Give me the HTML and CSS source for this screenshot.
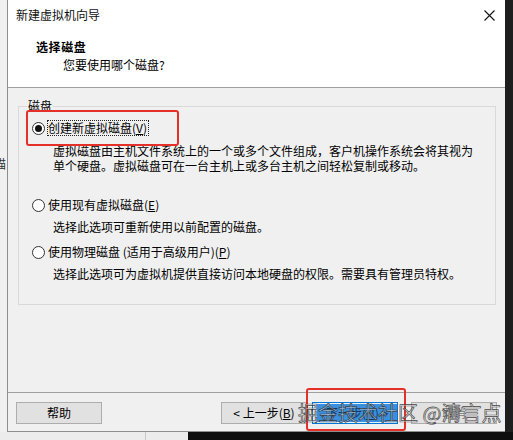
FILE: index.html
```html
<!DOCTYPE html>
<html lang="zh-CN">
<head>
<meta charset="utf-8">
<title>新建虚拟机向导</title>
<link rel="stylesheet" href="styles.css">
</head>
<body>
<div class="screen">
  <div class="left-strip"><span class="peek">描</span></div>
  <div class="dialog">
    <div class="header">
      <div class="titlebar">
        <span class="title">新建虚拟机向导</span>
        <svg class="close" width="11" height="11" viewBox="0 0 11 11"><path d="M0.5 0.5 L10.5 10.5 M10.5 0.5 L0.5 10.5" stroke="#111" stroke-width="1.1" fill="none"/></svg>
      </div>
      <div class="heading">
        <div class="h-title">选择磁盘</div>
        <div class="h-sub">您要使用哪个磁盘?</div>
      </div>
    </div>
    <div class="body">
      <div class="group">
        <div class="legend">磁盘</div>
        <div class="opt opt1">
          <span class="radio checked"><span class="dot"></span></span>
          <span class="label focus">创建新虚拟磁盘(<u>V</u>)</span>
        </div>
        <div class="desc desc1">虚拟磁盘由主机文件系统上的一个或多个文件组成，客户机操作系统会将其视为<br>单个硬盘。虚拟磁盘可在一台主机上或多台主机之间轻松复制或移动。</div>
        <div class="opt opt2">
          <span class="radio"></span>
          <span class="label">使用现有虚拟磁盘(<u>E</u>)</span>
        </div>
        <div class="desc desc2">选择此选项可重新使用以前配置的磁盘。</div>
        <div class="opt opt3">
          <span class="radio"></span>
          <span class="label">使用物理磁盘 (适用于高级用户)(<u>P</u>)</span>
        </div>
        <div class="desc desc3">选择此选项可为虚拟机提供直接访问本地硬盘的权限。需要具有管理员特权。</div>
      </div>
    </div>
    <div class="footer">
      <div class="btn help">帮助</div>
      <div class="btn back">&lt; 上一步(<u>B</u>)</div>
      <div class="btn next"><span class="next-hl">下一步(<u>N</u>) &gt;</span></div>
      <div class="btn cancel">取消</div>
    </div>
  </div>
  <div class="right-strip"></div>
  <div class="bottom-strip"><div class="bs-grey"><div class="bs-left"></div></div><div class="bs-dark"></div></div>
  <div class="mark mark1"></div>
  <div class="mark mark2"></div>
  <div class="watermark">掘金技术社区 @清言点</div>
</div>
</body>
</html>
```
FILE: styles.css
```css
html, body {
  margin: 0;
  padding: 0;
}
body {
  background: #1c1c1c;
  font-family: "Noto Sans CJK SC", "Noto Sans", sans-serif;
  font-size: 12px;
  color: #000;
}
.screen {
  width: 513px;
  height: 440px;
  display: grid;
  grid-template-columns: 7px 498px 8px;
  grid-template-rows: 432px 8px;
  position: relative;
  overflow: hidden;
}
.left-strip {
  background: #f0f0f0;
  overflow: hidden;
  display: flex;
  flex-direction: column;
}
.peek {
  margin-top: 156px;
  margin-left: -6px;
  line-height: 16px;
  color: #333;
  white-space: nowrap;
}
.dialog {
  background: #f0f0f0;
  border-left: 1px solid #8e8e8e;
  border-bottom: 1px solid #8e8e8e;
  display: flex;
  flex-direction: column;
  min-width: 0;
}
.header {
  background: #fff;
  height: 87px;
  border-bottom: 1px solid #a0a0a0;
  flex: none;
}
.titlebar {
  height: 30px;
  display: flex;
  align-items: center;
  padding-left: 8px;
}
.title {
  line-height: 16px;
  color: #111;
}
.close {
  margin-left: auto;
  margin-right: 10px;
}
.heading {
  margin-top: 9px;
  padding-left: 28px;
}
.h-title {
  font-weight: bold;
  line-height: 16px;
  letter-spacing: 0.6px;
}
.h-sub {
  margin-top: 2px;
  padding-left: 27px;
  line-height: 16px;
}
.body {
  flex: 1;
}
.group {
  margin: 18px 9px 0 10px;
  border: 1px solid #d9d9d9;
  padding: 0 8px 23px 8px;
}
.legend {
  margin-top: -9px;
  background: #f0f0f0;
  width: fit-content;
  padding: 0 1px;
  line-height: 16px;
}
.opt {
  display: flex;
  align-items: center;
  height: 16px;
  padding-left: 5px;
  white-space: nowrap;
}
.opt1 { margin-top: 6px; }
.opt2 { margin-top: 24px; }
.opt3 { margin-top: 10px; }
.radio {
  width: 13px;
  height: 13px;
  box-sizing: border-box;
  border: 1px solid #333;
  border-radius: 50%;
  background: #fff;
  display: flex;
  align-items: center;
  justify-content: center;
  flex: none;
}
.dot {
  width: 7px;
  height: 7px;
  border-radius: 50%;
  background: #111;
}
.label {
  margin-left: 2px;
  line-height: 14px;
  border: 1px solid transparent;
  padding: 0 1px 0 0;
}
.label.focus {
  border: 1px dotted #222;
}
.desc {
  padding-left: 26px;
  line-height: 15px;
  white-space: nowrap;
}
.desc1 { margin-top: 7px; }
.desc2 { margin-top: 6px; }
.desc3 { margin-top: 6px; }
u {
  text-decoration: underline;
  text-underline-offset: 1px;
}
.footer {
  border-top: 1px solid #a0a0a0;
  display: flex;
  align-items: flex-start;
  padding: 9px 0 0 8px;
  box-sizing: border-box;
  height: 39px;
  flex: none;
}
.btn {
  width: 86px;
  height: 22px;
  box-sizing: border-box;
  border: 1px solid #adadad;
  background: #e1e1e1;
  display: flex;
  align-items: center;
  justify-content: center;
  line-height: 16px;
  white-space: nowrap;
  flex: none;
}
.back { margin-left: 119px; }
.next {
  margin-left: 5px;
  border-color: #0078d7;
  background: #e5f1fb;
  color: #1b5fa8;
}
.next-hl {
  background: #3b8fdc;
  color: #123a66;
  height: 18px;
  line-height: 18px;
  width: 80px;
  margin-left: 4px;
  text-align: center;
}
.cancel { margin-left: 13px; color: #777; }
.right-strip {
  background: #1e1e1e;
}
.bottom-strip {
  grid-column: 1 / -1;
  display: flex;
}
.bs-grey {
  width: 188px;
  background: #ececec;
}
.bs-left {
  width: 145px;
  height: 100%;
  border-right: 1px solid #c8c8c8;
}
.bs-dark {
  flex: 1;
  background: #0e0e0e;
}
.mark {
  position: absolute;
  border: 2px solid #e5302a;
  border-radius: 3px;
  box-sizing: border-box;
}
.mark1 {
  left: 26px;
  top: 110px;
  width: 153px;
  height: 36px;
}
.mark2 {
  left: 306px;
  top: 388px;
  width: 100px;
  height: 43px;
}
.watermark {
  position: absolute;
  left: 298px;
  top: 401px;
  font-size: 20px;
  line-height: 24px;
  white-space: nowrap;
  color: rgba(235, 235, 235, 0.55);
  -webkit-text-stroke: 0.7px rgba(40, 40, 40, 0.85);
}
```
